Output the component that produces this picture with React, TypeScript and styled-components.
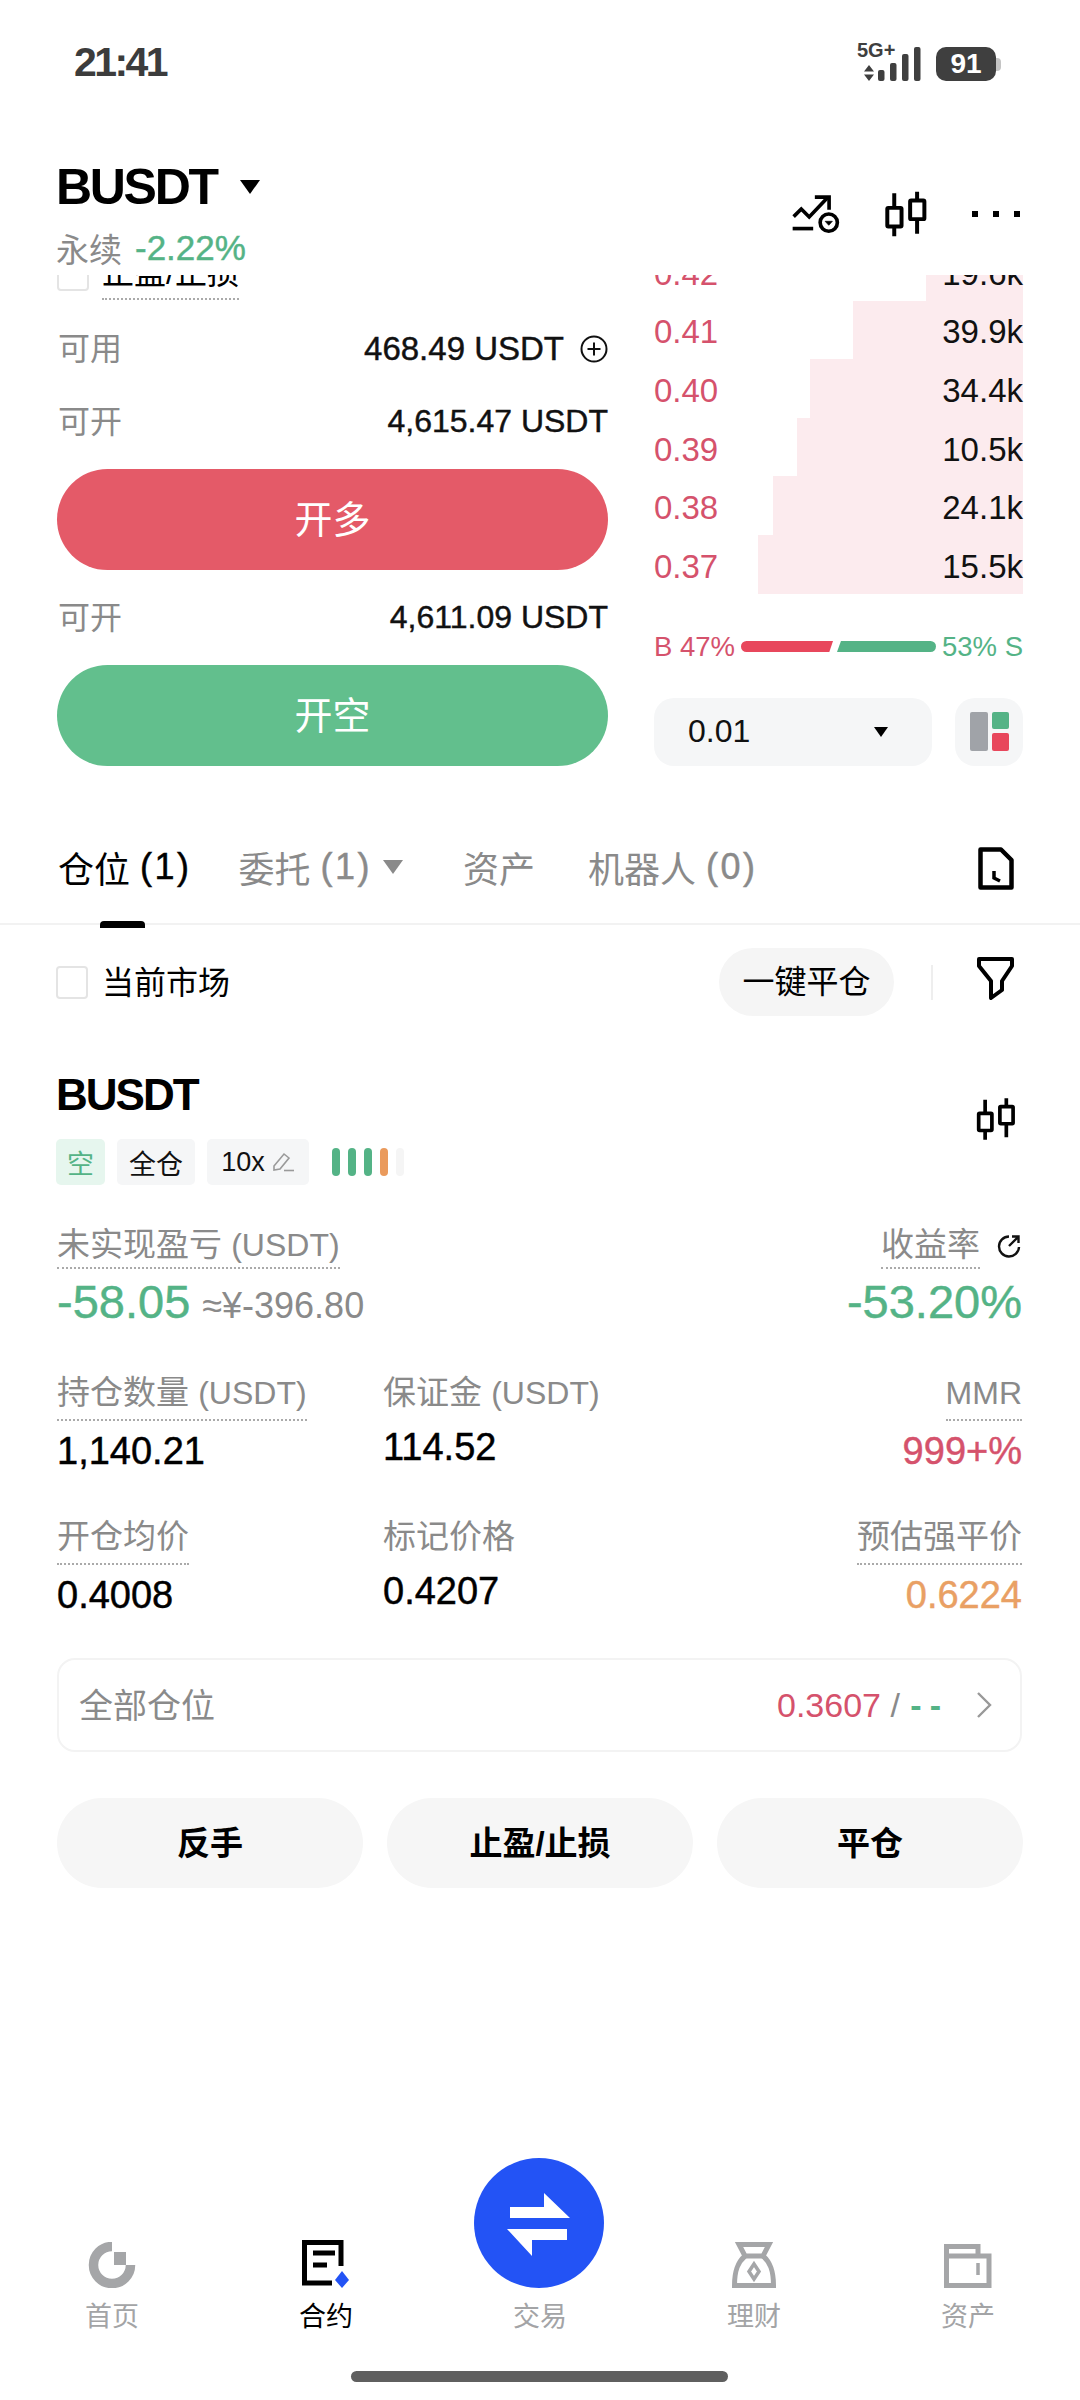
import styled, { createGlobalStyle, css } from 'styled-components';

const FONT = '"Liberation Sans", "Noto Sans CJK SC", sans-serif';
const RED = '#d5526c';
const GREEN = '#54b386';
const GRAY = '#8a8a8a';

const GlobalStyle = createGlobalStyle`
	html, body {
		margin: 0;
		padding: 0;
		background: #fff;
	}
	* {
		box-sizing: border-box;
	}
`;

const medium = css`
	-webkit-text-stroke: 0.45px currentColor;
`;

const Candles = ({ width, height }: { width: number; height: number }) => (
	<svg width={width} height={height} viewBox="370 120 140 145" fill="none" stroke="#000" strokeWidth="12">
		<path d="M403 130V176M403 228V260M472 125V154M472 206V252" />
		<rect x="382" y="174" width="43" height="56" rx="3" />
		<rect x="451" y="152" width="43" height="56" rx="3" />
	</svg>
);

const BOOK = [
	{ price: '0.42', qty: '19.6k', depth: 97 },
	{ price: '0.41', qty: '39.9k', depth: 170 },
	{ price: '0.40', qty: '34.4k', depth: 213 },
	{ price: '0.39', qty: '10.5k', depth: 226 },
	{ price: '0.38', qty: '24.1k', depth: 250 },
	{ price: '0.37', qty: '15.5k', depth: 265 },
];

const NAV_ICONS = {
	home: (
		<svg width="48" height="46" viewBox="0 0 48 46" fill="none">
			<path d="M24 4.5A18.5 18.5 0 1 0 42.5 23" stroke="#a5a6a8" strokeWidth="9.5" />
			<rect x="26" y="10" width="12" height="13" fill="#a5a6a8" />
		</svg>
	),
	contract: (
		<svg width="48" height="48" viewBox="0 0 48 48" fill="none">
			<path d="M39 26V2.5H2.5V43H30" stroke="#000" strokeWidth="5" />
			<path d="M11 13H33M11 25H25" stroke="#000" strokeWidth="5" />
			<path d="M40 31L47 40L40 48L33 40Z" fill="#2353f5" />
		</svg>
	),
	finance: (
		<svg width="44" height="46" viewBox="0 0 44 46" fill="none" stroke="#a5a6a8" strokeWidth="5">
			<path d="M7 2.5H37L31 14H13Z" />
			<path d="M13 14C6 20 2.5 28 2.5 43.5H41.5C41.5 28 38 20 31 14" />
			<path d="M22 22L27 29.5L22 37L17 29.5Z" strokeWidth="3.5" />
		</svg>
	),
	assets: (
		<svg width="48" height="44" viewBox="0 0 48 44" fill="none" stroke="#a5a6a8" strokeWidth="5">
			<path d="M2.5 12V2.5H34V12" />
			<path d="M2.5 12H45V41.5H2.5Z" />
			<path d="M34 19V31" strokeWidth="3.5" />
		</svg>
	),
};

const App = () => {
	return (
		<Page>
			<GlobalStyle />
			<StatusBar>
				<Clock>21:41</Clock>
				<StatusRight>
					<SignalBlock>
						<NetworkText>5G+</NetworkText>
						<svg width="64" height="38" viewBox="0 0 64 38" fill="#3f3f3f">
							<path d="M12 22L17 28.5H7ZM12 38L7 31.5H17Z" />
							<rect x="21" y="27" width="6.5" height="11" rx="2" />
							<rect x="33" y="20" width="6.5" height="18" rx="2" />
							<rect x="45" y="11" width="6.5" height="27" rx="2" />
							<rect x="57" y="4" width="6.5" height="34" rx="2" />
						</svg>
					</SignalBlock>
					<Battery>91</Battery>
					<BatteryCap />
				</StatusRight>
			</StatusBar>

			<Header>
				<HeaderLeft>
					<TitleRow>
						<Title>BUSDT</Title>
						<TitleCaret />
					</TitleRow>
					<SubRow>
						<span>永续</span>
						<SubChange>-2.22%</SubChange>
					</SubRow>
				</HeaderLeft>
				<HeaderIcons>
					<svg width="53" height="45" viewBox="90 125 160 135" fill="none" stroke="#000" strokeWidth="11">
						<path d="M101 199L124 176L148 200L203 142" />
						<path d="M165 140H208V178" />
						<path d="M98 235H160" />
						<circle cx="207" cy="217" r="26" />
						<path d="M196 213H218L207 225Z" fill="#000" strokeWidth="2" />
					</svg>
					<Candles width={47} height={48} />
					<DotsIcon>
						<i />
						<i />
						<i />
					</DotsIcon>
				</HeaderIcons>
			</Header>

			<TradeViewport>
				<TradeGrid>
					<FormColumn>
						<TpRow>
							<CheckBox />
							<TpLabel>止盈/止损</TpLabel>
						</TpRow>
						<BalanceRow>
							<GrayText>可用</GrayText>
							<BalanceValue $size={33}>
								<span>468.49&nbsp;USDT</span>
								<svg width="28" height="28" viewBox="0 0 28 28" fill="none" stroke="#111" strokeWidth="2">
									<circle cx="14" cy="14" r="12.5" />
									<path d="M14 7.5V20.5M7.5 14H20.5" />
								</svg>
							</BalanceValue>
						</BalanceRow>
						<BalanceRow>
							<GrayText>可开</GrayText>
							<BalanceValue>4,615.47 USDT</BalanceValue>
						</BalanceRow>
						<ActionButton $bg="#e45a68">开多</ActionButton>
						<BalanceRow $spaced>
							<GrayText>可开</GrayText>
							<BalanceValue>4,611.09 USDT</BalanceValue>
						</BalanceRow>
						<ActionButton $bg="#62bf8d">开空</ActionButton>
					</FormColumn>

					<BookColumn>
						{BOOK.map((row) => (
							<BookRow key={row.price} $depth={row.depth}>
								<BookPrice>{row.price}</BookPrice>
								<BookQty>{row.qty}</BookQty>
							</BookRow>
						))}
						<RatioRow>
							<RatioText $color={RED}>B 47%</RatioText>
							<RatioBars>
								<RatioBuy />
								<RatioSell />
							</RatioBars>
							<RatioText $color={GREEN}>53% S</RatioText>
						</RatioRow>
						<BookControls>
							<DepthSelect>
								<span>0.01</span>
								<SmallCaret />
							</DepthSelect>
							<LayoutButton>
								<svg width="39" height="39" viewBox="0 0 39 39">
									<rect x="0" y="0" width="18" height="39" rx="2" fill="#a0a3a8" />
									<rect x="22" y="0" width="17" height="17" rx="2" fill="#54b386" />
									<rect x="22" y="21" width="17" height="18" rx="2" fill="#e8475c" />
								</svg>
							</LayoutButton>
						</BookControls>
					</BookColumn>
				</TradeGrid>
			</TradeViewport>

			<TabBar>
				<TabList>
					<Tab $active>
						仓位<TabCount>(1)</TabCount>
					</Tab>
					<Tab>
						委托<TabCount>(1)</TabCount>
						<TabCaret />
					</Tab>
					<Tab $wide>资产</Tab>
					<Tab>
						机器人<TabCount>(0)</TabCount>
					</Tab>
				</TabList>
				<svg width="36" height="43" viewBox="0 0 36 43" fill="none" stroke="#000" strokeWidth="4.5">
					<path d="M2.5 2.5H23L33.5 13V40.5H2.5Z" strokeLinejoin="round" />
					<path d="M16 24V31L22 34" strokeWidth="3.5" />
				</svg>
			</TabBar>

			<FilterRow>
				<FilterLeft>
					<CheckBox />
					<FilterLabel>当前市场</FilterLabel>
				</FilterLeft>
				<FilterRight>
					<ClosePill>一键平仓</ClosePill>
					<FilterDivider />
					<FilterIcon width="37" height="43" viewBox="0 0 37 43" fill="none" stroke="#000" strokeWidth="4">
						<path d="M2 2H35V9L25 24V33L14 41V24L2 9Z" strokeLinejoin="round" />
					</FilterIcon>
				</FilterRight>
			</FilterRow>

			<PositionHead>
				<div>
					<PositionTitle>BUSDT</PositionTitle>
					<TagRow>
						<Tag $bg="#e6f6ee" $color={GREEN} $width={49}>
							空
						</Tag>
						<Tag $width={78}>全仓</Tag>
						<Tag $width={102}>
							10x
							<svg width="24" height="20" viewBox="0 0 24 20" fill="none" stroke="#9a9a9a" strokeWidth="1.6">
								<path d="M3 14L13 2L18 6L9 17L3 18Z" />
								<path d="M13 18.5H23" />
							</svg>
						</Tag>
						<RiskBars>
							<RiskBar $color="#54b386" />
							<RiskBar $color="#54b386" />
							<RiskBar $color="#54b386" />
							<RiskBar $color="#ea9a5c" />
							<RiskBar $color="#f5f5f5" />
						</RiskBars>
					</TagRow>
				</div>
				<PositionCandles>
					<Candles width={43} height={46} />
				</PositionCandles>
			</PositionHead>

			<PnlRow>
				<PnlCell>
					<PnlLabel>
						未实现盈亏 <Latin>(USDT)</Latin>
					</PnlLabel>
					<PnlValues>
						<PnlValue>-58.05</PnlValue>
						<PnlFiat>≈¥-396.80</PnlFiat>
					</PnlValues>
				</PnlCell>
				<PnlCell $right>
					<PnlLabelRow>
						<PnlLabel>收益率</PnlLabel>
						<svg width="26" height="26" viewBox="0 0 26 26" fill="none" stroke="#111" strokeWidth="2.4">
							<path d="M13 3.5A10 10 0 1 0 23 14" />
							<path d="M13 13L22 4M16 3.5H22.5V10" />
						</svg>
					</PnlLabelRow>
					<PnlValue>-53.20%</PnlValue>
				</PnlCell>
			</PnlRow>

			<MetricGrid>
				<Metric>
					<MetricLabel $dotted>
						持仓数量 <Latin>(USDT)</Latin>
					</MetricLabel>
					<MetricValue>1,140.21</MetricValue>
				</Metric>
				<Metric>
					<MetricLabel>
						保证金 <Latin>(USDT)</Latin>
					</MetricLabel>
					<MetricValue $tight>114.52</MetricValue>
				</Metric>
				<Metric $right>
					<MetricLabel $dotted>
						<Latin>MMR</Latin>
					</MetricLabel>
					<MetricValue $color={RED}>999+%</MetricValue>
				</Metric>
				<Metric>
					<MetricLabel $dotted>开仓均价</MetricLabel>
					<MetricValue>0.4008</MetricValue>
				</Metric>
				<Metric>
					<MetricLabel>标记价格</MetricLabel>
					<MetricValue $tight>0.4207</MetricValue>
				</Metric>
				<Metric $right>
					<MetricLabel $dotted>预估强平价</MetricLabel>
					<MetricValue $color="#e9a064">0.6224</MetricValue>
				</Metric>
			</MetricGrid>

			<AllPositions>
				<AllLabel>全部仓位</AllLabel>
				<AllRight>
					<AllPrice $color={RED}>0.3607</AllPrice>
					<AllPrice $color={GRAY}>&nbsp;/&nbsp;</AllPrice>
					<AllDashes>--</AllDashes>
					<svg width="17" height="28" viewBox="0 0 17 28" fill="none" stroke="#999" strokeWidth="2.4">
						<path d="M2 2L14 14L2 26" />
					</svg>
				</AllRight>
			</AllPositions>

			<PositionActions>
				<GhostButton>反手</GhostButton>
				<GhostButton>止盈/止损</GhostButton>
				<GhostButton>平仓</GhostButton>
			</PositionActions>

			<BottomNav>
				<NavItem>
					{NAV_ICONS.home}
					<NavLabel>首页</NavLabel>
				</NavItem>
				<NavItem>
					{NAV_ICONS.contract}
					<NavLabel $active>合约</NavLabel>
				</NavItem>
				<NavItem>
					<TradeIcon width="130" height="130" viewBox="0 0 130 130">
						<circle cx="65" cy="65" r="65" fill="#2353f5" />
						<path d="M36 49H70V35L96 60H36Z" fill="#fff" />
						<path d="M93 71H33L58 98V82H93Z" fill="#fff" />
					</TradeIcon>
					<NavLabel>交易</NavLabel>
				</NavItem>
				<NavItem>
					{NAV_ICONS.finance}
					<NavLabel>理财</NavLabel>
				</NavItem>
				<NavItem>
					{NAV_ICONS.assets}
					<NavLabel>资产</NavLabel>
				</NavItem>
			</BottomNav>
			<HomeBar />
		</Page>
	);
};

const Page = styled.div`
	width: 1080px;
	height: 2400px;
	overflow: hidden;
	display: flex;
	flex-direction: column;
	background: #fff;
	color: #000;
	font-family: ${FONT};
`;

const StatusBar = styled.div`
	height: 124px;
	flex: none;
	padding: 0 79px 0 74px;
	display: flex;
	align-items: center;
	justify-content: space-between;
`;

const Clock = styled.span`
	font-size: 41px;
	font-weight: 700;
	letter-spacing: -2.6px;
	color: #3c3c3c;
`;

const StatusRight = styled.div`
	display: flex;
	align-items: flex-end;
`;

const SignalBlock = styled.div`
	position: relative;
	width: 64px;
	height: 38px;
	margin-right: 15px;
`;

const NetworkText = styled.span`
	position: absolute;
	left: 0;
	top: -3px;
	font-size: 20px;
	line-height: 20px;
	font-weight: 700;
	color: #3f3f3f;
`;

const Battery = styled.div`
	width: 60px;
	height: 34px;
	border-radius: 10px;
	background: #3f3f3f;
	color: #fff;
	font-size: 28px;
	line-height: 34px;
	font-weight: 700;
	text-align: center;
`;

const BatteryCap = styled.div`
	width: 5px;
	height: 13px;
	margin-bottom: 10px;
	border-radius: 0 4px 4px 0;
	background: #c4c4c4;
`;

const Header = styled.div`
	height: 151px;
	flex: none;
	padding: 33px 60px 0 56px;
	display: flex;
	justify-content: space-between;
	align-items: flex-start;
`;

const HeaderLeft = styled.div`
	display: flex;
	flex-direction: column;
`;

const TitleRow = styled.div`
	height: 60px;
	display: flex;
	align-items: center;
`;

const Title = styled.span`
	font-size: 50px;
	font-weight: 700;
	letter-spacing: -2.3px;
`;

const TitleCaret = styled.i`
	width: 0;
	height: 0;
	margin-left: 23px;
	border-left: 10.5px solid transparent;
	border-right: 10.5px solid transparent;
	border-top: 14px solid #000;
`;

const SubRow = styled.div`
	margin-top: 9px;
	height: 44px;
	display: flex;
	align-items: center;
	font-size: 33px;
	color: ${GRAY};
`;

const SubChange = styled.span`
	margin-left: 13px;
	font-size: 35px;
	letter-spacing: 0;
	color: ${GREEN};
	${medium}
`;

const HeaderIcons = styled.div`
	margin-top: 33px;
	display: flex;
	align-items: center;
	gap: 40px;
`;

const DotsIcon = styled.div`
	margin-left: 2px;
	display: flex;
	gap: 15px;
	i {
		width: 6px;
		height: 6px;
		background: #000;
	}
`;

const TradeViewport = styled.div`
	height: 491px;
	flex: none;
	overflow: hidden;
`;

const TradeGrid = styled.div`
	margin-top: -33px;
	padding: 0 57px;
	display: grid;
	grid-template-columns: 551px 369px;
	column-gap: 46px;
`;

const FormColumn = styled.div`
	padding-top: 3px;
	display: flex;
	flex-direction: column;
`;

const TpRow = styled.div`
	height: 58px;
	margin-bottom: 9px;
	display: flex;
	align-items: center;
`;

const CheckBox = styled.div`
	width: 32px;
	height: 33px;
	flex: none;
	border: 2px solid #e4e4e4;
	border-radius: 4px;
`;

const TpLabel = styled.span`
	margin-left: 13px;
	font-size: 32px;
	line-height: 50px;
	border-bottom: 2px dotted #aaa;
`;

const BalanceRow = styled.div<{ $spaced?: boolean }>`
	height: 73px;
	margin-top: ${({ $spaced }) => ($spaced ? '11px' : '0')};
	display: flex;
	align-items: center;
	justify-content: space-between;
`;

const GrayText = styled.span`
	padding: 0 0 5px 1px;
	font-size: 32px;
	color: ${GRAY};
`;

const BalanceValue = styled.span<{ $size?: number }>`
	display: flex;
	align-items: center;
	gap: 16px;
	font-size: ${({ $size }) => $size ?? 32}px;
	color: #111;
	${medium}
`;

const ActionButton = styled.div<{ $bg: string }>`
	height: 101px;
	margin-top: 11px;
	padding-bottom: 6px;
	border-radius: 51px;
	background: ${({ $bg }) => $bg};
	color: #fff;
	font-size: 38px;
	display: flex;
	align-items: center;
	justify-content: center;
`;

const BookColumn = styled.div`
	display: flex;
	flex-direction: column;
`;

const BookRow = styled.div<{ $depth: number }>`
	height: 58.6px;
	padding-top: 5px;
	display: flex;
	align-items: center;
	justify-content: space-between;
	background: linear-gradient(
		to left,
		#fcebee ${({ $depth }) => $depth}px,
		transparent ${({ $depth }) => $depth}px
	);
`;

const BookPrice = styled.span`
	font-size: 33px;
	color: ${RED};
`;

const BookQty = styled.span`
	font-size: 33px;
	color: #111;
`;

const RatioRow = styled.div`
	height: 32px;
	margin-top: 36px;
	padding-top: 2px;
	display: flex;
	align-items: center;
	justify-content: space-between;
`;

const RatioText = styled.span<{ $color: string }>`
	font-size: 27.5px;
	color: ${({ $color }) => $color};
`;

const RatioBars = styled.div`
	display: flex;
	gap: 0;
	width: 195px;
`;

const RatioBuy = styled.div`
	width: 92px;
	height: 11px;
	border-radius: 6px 0 0 6px;
	background: #e8475c;
	clip-path: polygon(0 0, 100% 0, 96% 100%, 0 100%);
`;

const RatioSell = styled.div`
	width: 99px;
	height: 11px;
	margin-left: 4px;
	border-radius: 0 6px 6px 0;
	background: #54b386;
	clip-path: polygon(4% 0, 100% 0, 100% 100%, 0 100%);
`;

const BookControls = styled.div`
	margin-top: 36px;
	display: flex;
	justify-content: space-between;
`;

const DepthSelect = styled.div`
	width: 278px;
	height: 68px;
	padding: 0 44px 0 34px;
	border-radius: 20px;
	background: #f5f6f7;
	font-size: 32px;
	color: #111;
	display: flex;
	align-items: center;
	justify-content: space-between;
`;

const SmallCaret = styled.i`
	width: 0;
	height: 0;
	border-left: 7.5px solid transparent;
	border-right: 7.5px solid transparent;
	border-top: 10px solid #000;
`;

const LayoutButton = styled.div`
	width: 68px;
	height: 68px;
	border-radius: 20px;
	background: #f5f6f7;
	display: flex;
	align-items: center;
	justify-content: center;
`;

const TabBar = styled.div`
	height: 159px;
	flex: none;
	padding: 81px 66px 0 58px;
	border-bottom: 2px solid #f2f2f2;
	display: flex;
	justify-content: space-between;
	align-items: flex-start;
`;

const TabList = styled.div`
	display: flex;
	gap: 47px;
	padding-bottom: 5px;
`;

const Tab = styled.div<{ $active?: boolean; $wide?: boolean }>`
	position: relative;
	height: 40px;
	margin: ${({ $wide }) => ($wide ? '0 6px 0 13px' : '0')};
	display: flex;
	align-items: center;
	font-size: 36px;
	color: ${({ $active }) => ($active ? '#000' : GRAY)};
	${({ $active }) =>
		$active &&
		css`
			&::after {
				content: '';
				position: absolute;
				left: 42px;
				bottom: -41px;
				width: 45px;
				height: 7px;
				border-radius: 4px 4px 0 0;
				background: #000;
			}
		`}
`;

const TabCount = styled.span`
	margin-left: 10px;
	letter-spacing: 2.5px;
	${medium}
`;

const TabCaret = styled.i`
	width: 0;
	height: 0;
	margin-left: 11px;
	border-left: 10px solid transparent;
	border-right: 10px solid transparent;
	border-top: 14px solid ${GRAY};
`;

const FilterRow = styled.div`
	flex: none;
	margin-top: 23px;
	padding: 0 66px 0 56px;
	display: flex;
	justify-content: space-between;
	align-items: center;
`;

const FilterLeft = styled.div`
	display: flex;
	align-items: center;
	gap: 14px;
`;

const FilterLabel = styled.span`
	padding-bottom: 4px;
	font-size: 32px;
`;

const FilterRight = styled.div`
	display: flex;
	align-items: center;
`;

const FilterIcon = styled.svg`
	margin-bottom: 8px;
`;

const ClosePill = styled.div`
	width: 175px;
	height: 68px;
	padding-bottom: 6px;
	border-radius: 34px;
	background: #f5f5f5;
	font-size: 32px;
	display: flex;
	align-items: center;
	justify-content: center;
`;

const FilterDivider = styled.div`
	width: 2px;
	height: 35px;
	margin: 0 44px 0 37px;
	background: #eeeeee;
`;

const PositionHead = styled.div`
	flex: none;
	margin-top: 49px;
	padding: 0 62px 0 56px;
	display: flex;
	justify-content: space-between;
	align-items: flex-start;
`;

const PositionTitle = styled.div`
	height: 60px;
	line-height: 60px;
	font-size: 44px;
	font-weight: 700;
	letter-spacing: -2px;
`;

const TagRow = styled.div`
	margin-top: 14px;
	display: flex;
	align-items: center;
	gap: 12px;
`;

const Tag = styled.div<{ $bg?: string; $color?: string; $width: number }>`
	width: ${({ $width }) => $width}px;
	height: 46px;
	border-radius: 5px;
	background: ${({ $bg }) => $bg ?? '#f5f6f7'};
	color: ${({ $color }) => $color ?? '#111'};
	font-size: 27px;
	display: flex;
	align-items: center;
	justify-content: center;
	gap: 6px;
`;

const RiskBars = styled.div`
	margin-left: 11px;
	display: flex;
	gap: 8px;
`;

const RiskBar = styled.div<{ $color: string }>`
	width: 8px;
	height: 28px;
	border-radius: 4px;
	background: ${({ $color }) => $color};
`;

const PositionCandles = styled.div`
	margin-top: 31px;
`;

const PnlRow = styled.div`
	flex: none;
	margin-top: 38px;
	padding: 0 58px 0 57px;
	display: flex;
	justify-content: space-between;
`;

const PnlCell = styled.div<{ $right?: boolean }>`
	display: flex;
	flex-direction: column;
	align-items: ${({ $right }) => ($right ? 'flex-end' : 'flex-start')};
`;

const PnlLabelRow = styled.div`
	display: flex;
	align-items: flex-start;
	gap: 16px;
	svg {
		margin-top: 10px;
	}
`;

const PnlLabel = styled.div`
	font-size: 33px;
	line-height: 44px;
	color: ${GRAY};
	border-bottom: 2px dotted #aaa;
`;

const Latin = styled.span`
	font-size: 32px;
`;

const PnlValues = styled.div`
	display: flex;
	align-items: baseline;
	gap: 12px;
`;

const PnlValue = styled.div`
	margin-top: 7px;
	font-size: 47px;
	line-height: 52px;
	color: ${GREEN};
	${medium}
`;

const PnlFiat = styled.span`
	font-size: 36px;
	color: ${GRAY};
`;

const MetricGrid = styled.div`
	flex: none;
	margin-top: 38px;
	padding: 0 58px 0 57px;
	display: grid;
	grid-template-columns: 326px 1fr auto;
	row-gap: 39px;
`;

const Metric = styled.div<{ $right?: boolean }>`
	display: flex;
	flex-direction: column;
	align-items: ${({ $right }) => ($right ? 'flex-end' : 'flex-start')};
`;

const MetricLabel = styled.div<{ $dotted?: boolean }>`
	height: 55px;
	line-height: 54px;
	font-size: 33px;
	color: ${GRAY};
	border-bottom: 2px dotted ${({ $dotted }) => ($dotted ? '#aaa' : 'transparent')};
`;

const MetricValue = styled.div<{ $color?: string; $tight?: boolean }>`
	margin-top: ${({ $tight }) => ($tight ? '6px' : '10px')};
	font-size: 38px;
	line-height: 40px;
	color: ${({ $color }) => $color ?? '#000'};
	${medium}
`;

const AllPositions = styled.div`
	flex: none;
	height: 94px;
	margin: 43px 58px 0 57px;
	padding: 0 27px 0 20px;
	border: 2px solid #f3f3f3;
	border-radius: 18px;
	display: flex;
	align-items: center;
	justify-content: space-between;
`;

const AllLabel = styled.span`
	padding-bottom: 4px;
	font-size: 34px;
	color: ${GRAY};
`;

const AllRight = styled.div`
	display: flex;
	align-items: center;
	svg {
		margin-left: 27px;
	}
`;

const AllPrice = styled.span<{ $color: string }>`
	font-size: 34px;
	color: ${({ $color }) => $color};
`;

const AllDashes = styled.span`
	margin-left: 1px;
	font-size: 34px;
	font-weight: 700;
	letter-spacing: 8px;
	color: ${GREEN};
`;

const PositionActions = styled.div`
	flex: none;
	margin-top: 46px;
	padding: 0 57px;
	display: grid;
	grid-template-columns: repeat(3, 1fr);
	column-gap: 24px;
`;

const GhostButton = styled.div`
	height: 90px;
	padding-bottom: 4px;
	border-radius: 45px;
	background: #f6f6f6;
	font-size: 33px;
	font-weight: 700;
	display: flex;
	align-items: center;
	justify-content: center;
`;

const BottomNav = styled.div`
	margin-top: auto;
	padding: 0 5px;
	display: grid;
	grid-template-columns: repeat(5, 214px);
	align-items: end;
`;

const NavItem = styled.div`
	display: flex;
	flex-direction: column;
	align-items: center;
	gap: 11px;
`;

const TradeIcon = styled.svg`
	margin-right: 2px;
`;

const NavLabel = styled.span<{ $active?: boolean }>`
	font-size: 27px;
	line-height: 36px;
	color: ${({ $active }) => ($active ? '#000' : '#a3a4a6')};
`;

const HomeBar = styled.div`
	flex: none;
	width: 377px;
	height: 11px;
	margin: 36px 0 18px 351px;
	border-radius: 6px;
	background: #5f5f5f;
`;

export default App;
